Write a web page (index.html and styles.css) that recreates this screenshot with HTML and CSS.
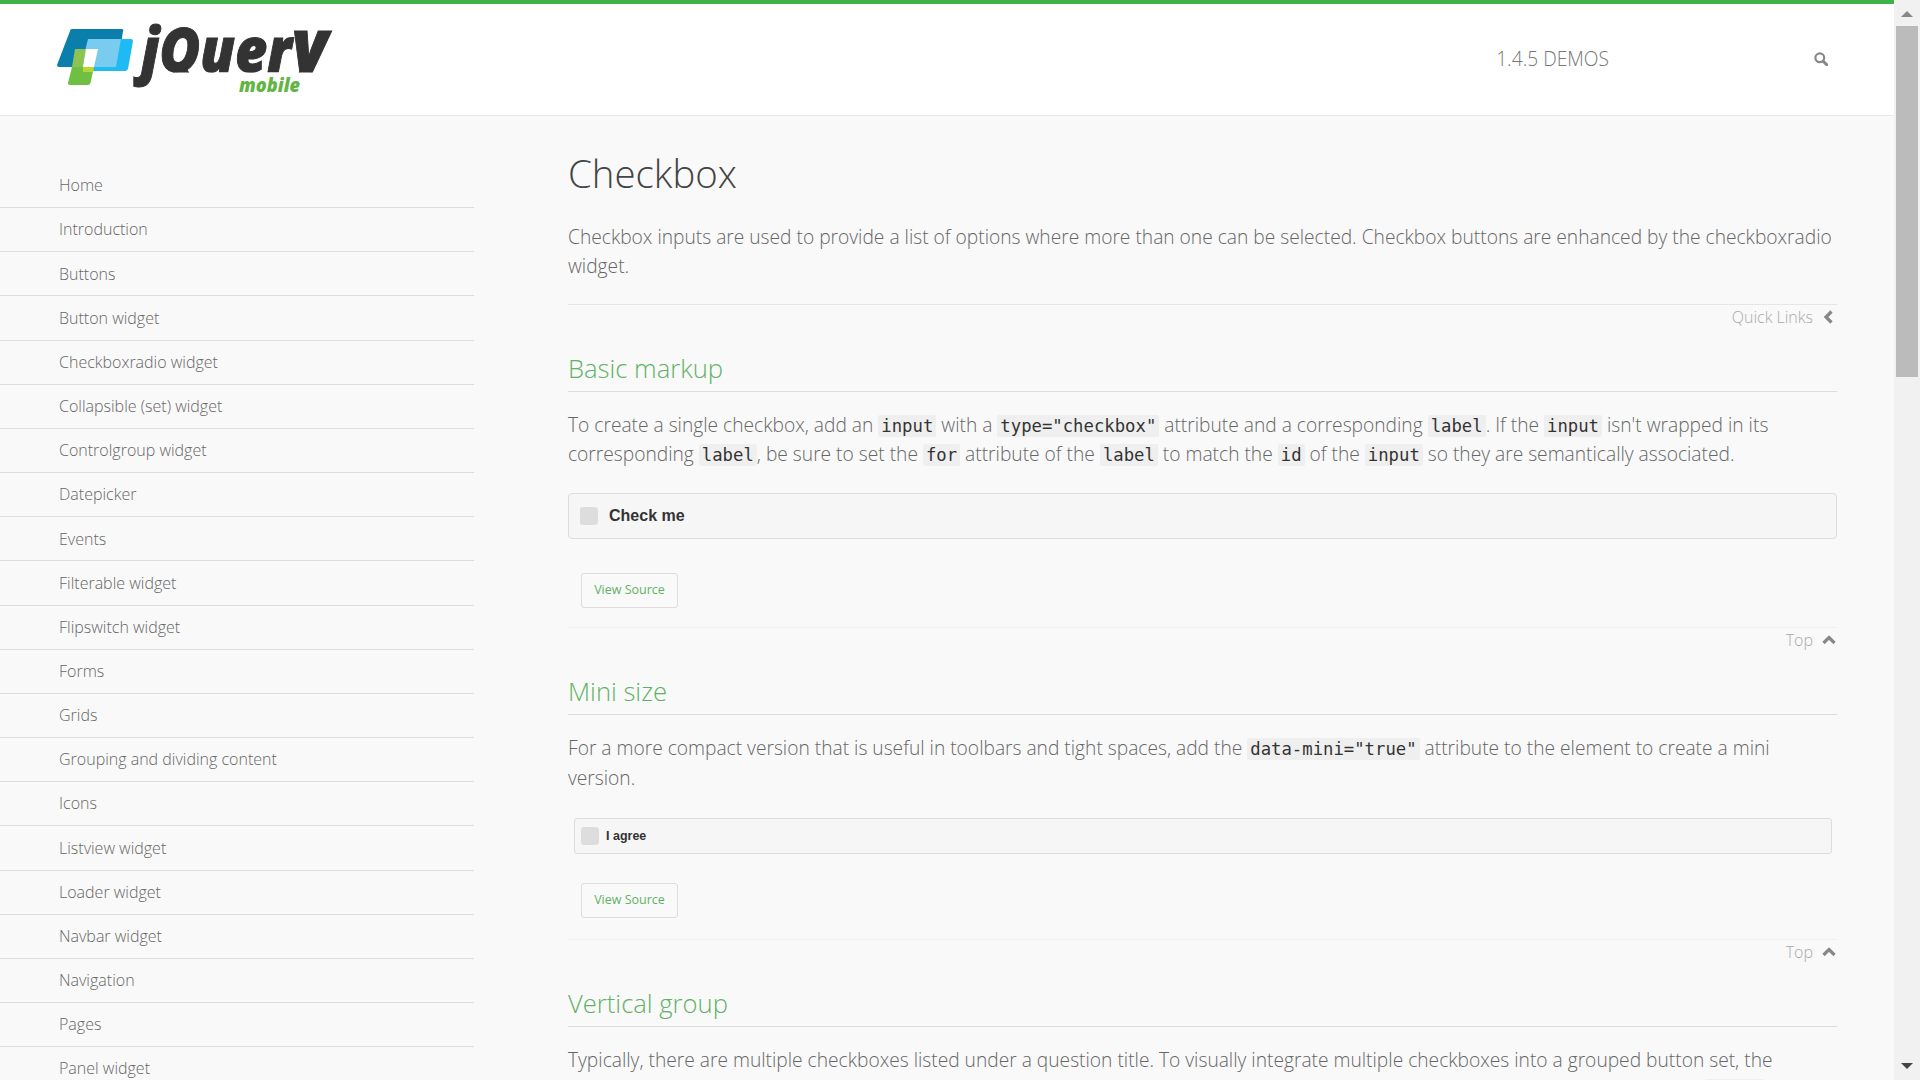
FILE: index.html
```html
<!DOCTYPE html>
<html lang="en">
<head>
    <meta charset="UTF-8">
    <title>Checkbox - jQuery Mobile Demos</title>
    <link rel="stylesheet" href="styles.css">
</head>
<body>

<div class="page">
    <header class="site-header">
        <a class="logo" href="#">
            <svg class="logo-svg" width="280" height="70" viewBox="0 0 280 70">
                <defs>
                    <clipPath id="word-clip"><polygon points="50,-30 290,-30 290,47.5 118,47.5 118,90 50,90"/></clipPath>
                </defs>
                <path d="M13 6 Q13 4 15 4 H65 Q67 4 66 6 L61 40 Q61 42 59 42 H2 Q0 42 0 40 Z" fill="#0b7fab"/>
                <path d="M33 14 H74 Q76 14 76 16 L71 44 Q70 46 68 46 H29 Q27 46 27 44 Z" fill="#1dbaf3"/>
                <path d="M31 14 H64 L59 42 H24 Z" fill="#7acbf0"/>
                <path d="M18 24 H29 L26 42 H15 Z" fill="#8dc353"/>
                <path d="M29 24 H41 L37 42 H26 Z" fill="#fff"/>
                <path d="M15 42 H37 L33.5 58 Q33 60 31 60 H13 Q11 60 11 58 Z" fill="#6ebf42"/>
                <path d="M26 42 H37 L36 47 H26 Z" fill="#bcd631"/>
                <text class="logo-word" clip-path="url(#word-clip)" x="84" y="47" textLength="187" lengthAdjust="spacingAndGlyphs">jQuer<tspan class="logo-y">y</tspan></text>
                <text class="logo-sub" x="182" y="67" textLength="61" lengthAdjust="spacingAndGlyphs">mobile</text>
            </svg>
        </a>
        <div class="header-right">
            <span class="version">1.4.5 DEMOS</span>
            <svg class="search-icon" width="14" height="14" viewBox="0 0 14 14">
                <circle cx="5.8" cy="5.8" r="4.4" fill="none" stroke="#888" stroke-width="2.2"/>
                <path d="M9.2 9.2 L12.6 12.6" stroke="#888" stroke-width="3" stroke-linecap="round"/>
            </svg>
        </div>
    </header>

    <div class="layout">
        <nav class="side-nav">
            <ul>
                <li>Home</li>
                <li>Introduction</li>
                <li>Buttons</li>
                <li>Button widget</li>
                <li>Checkboxradio widget</li>
                <li>Collapsible (set) widget</li>
                <li>Controlgroup widget</li>
                <li>Datepicker</li>
                <li>Events</li>
                <li>Filterable widget</li>
                <li>Flipswitch widget</li>
                <li>Forms</li>
                <li>Grids</li>
                <li>Grouping and dividing content</li>
                <li>Icons</li>
                <li>Listview widget</li>
                <li>Loader widget</li>
                <li>Navbar widget</li>
                <li>Navigation</li>
                <li>Pages</li>
                <li>Panel widget</li>
            </ul>
        </nav>

        <main class="content">
            <h1>Checkbox</h1>
            <p class="intro">Checkbox inputs are used to provide a list of options where more than one can be selected. Checkbox buttons are enhanced by the checkboxradio widget.</p>

            <div class="jump-row">
                <span>Quick Links</span>
                <svg width="14" height="14" viewBox="0 0 14 14"><path d="M9.5 1.5 L4 7 L9.5 12.5" fill="none" stroke="#888" stroke-width="3.2"/></svg>
            </div>

            <section class="demo demo-first">
                <h2>Basic markup</h2>
                <p>To create a single checkbox, add an <code>input</code> with a <code>type="checkbox"</code> attribute and a corresponding <code>label</code>. If the <code>input</code> isn't wrapped in its corresponding <code>label</code>, be sure to set the <code>for</code> attribute of the <code>label</code> to match the <code>id</code> of the <code>input</code> so they are semantically associated.</p>
                <div class="check-field"><span class="check-box"></span>Check me</div>
                <a class="source-btn" href="#">View Source</a>
            </section>

            <div class="jump-row">
                <span>Top</span>
                <svg width="14" height="14" viewBox="0 0 14 14"><path d="M1.5 10 L7 4.5 L12.5 10" fill="none" stroke="#888" stroke-width="3.2"/></svg>
            </div>

            <section class="demo demo-mini">
                <h2>Mini size</h2>
                <p>For a more compact version that is useful in toolbars and tight spaces, add the <code>data-mini="true"</code> attribute to the element to create a mini version.</p>
                <div class="check-field check-mini"><span class="check-box"></span>I agree</div>
                <a class="source-btn" href="#">View Source</a>
            </section>

            <div class="jump-row">
                <span>Top</span>
                <svg width="14" height="14" viewBox="0 0 14 14"><path d="M1.5 10 L7 4.5 L12.5 10" fill="none" stroke="#888" stroke-width="3.2"/></svg>
            </div>

            <section class="demo">
                <h2>Vertical group</h2>
                <p>Typically, there are multiple checkboxes listed under a question title. To visually integrate multiple checkboxes into a grouped button set, the framework will automatically remove all margins between buttons and round only the top and bottom corners of the set. Wrap each <code>input</code> in a fieldset.</p>
            </section>
        </main>
    </div>
</div>

<div class="scrollbar">
    <span class="arrow-up"></span>
    <div class="thumb"></div>
    <span class="arrow-down"></span>
</div>

</body>
</html>
```

FILE: styles.css
```css
html, body { margin: 0; height: 100%; }
body { display: flex; height: 100vh; overflow: hidden; background: #f9f9f9; color: #666; font-family: "Open Sans", sans-serif; font-weight: 300; }

.page { flex: 1; min-width: 0; overflow: hidden; }

.site-header { height: 111px; background: white; border-top: 4px solid #3eb249; border-bottom: 1px solid #e9e9e9; display: flex; justify-content: space-between; align-items: center; }
.logo { display: block; margin-left: 57px; height: 70px; }
.logo-svg { overflow: visible; }
.logo-word { font-family: "Open Sans", sans-serif; font-weight: 800; font-style: italic; font-size: 62px; fill: #333; stroke: #333; stroke-width: 1px; }
.logo-y { font-size: 74px; }
.logo-sub { font-family: "Open Sans", sans-serif; font-weight: 800; font-style: italic; font-size: 19px; fill: #62b544; }
.header-right { display: flex; align-items: center; margin-right: 66px; padding-bottom: 2px; }
.version { font-size: 19.2px; color: #777; margin-right: 205px; }

.layout { display: flex; }

.side-nav { width: 474px; margin-top: 48px; flex-shrink: 0; }
.side-nav ul { list-style: none; margin: 0; padding: 0; }
.side-nav li { height: 44.17px; box-sizing: border-box; padding: 0 0 0.6px 59px; display: flex; align-items: center; font-size: 16px; color: #666; border-bottom: 1px solid #ddd; }

.content { width: 1269px; margin-left: 94px; }

h1 { font-size: 38.4px; font-weight: 300; color: #444; line-height: 50px; margin: 32px 0 0; }
p { font-size: 19.2px; line-height: 29.4px; margin: 0; }
.intro { margin-top: 24px; padding-bottom: 23px; border-bottom: 1px solid #e6e6e6; }

.jump-row { display: flex; justify-content: flex-end; align-items: center; gap: 9px; height: 27px; box-sizing: border-box; padding: 0 1px 3px 0; font-size: 16px; color: #aaa; }

.demo { padding-top: 19px; border-bottom: 1px solid #f0f0f0; padding-bottom: 19px; }
.demo h2 { font-size: 25.6px; font-weight: 300; color: #5fb265; line-height: 36px; margin: 0 0 18px; padding-bottom: 4px; border-bottom: 1px solid #ddd; }

code { font-family: "DejaVu Sans Mono", monospace; font-size: 17.28px; line-height: 1; color: #333; background: #efefef; padding: 1px 3px; border-radius: 2px; }

.check-field { display: flex; align-items: center; height: 46px; box-sizing: border-box; margin-top: 24.5px; background: #f6f6f6; border: 1px solid #ddd; border-radius: 4px; padding-left: 11px; font-family: "Liberation Sans", sans-serif; font-weight: bold; font-size: 16px; color: #333; }
.check-box { width: 18px; height: 18px; background: #ddd; border-radius: 3px; margin-right: 11px; }
.check-mini { height: 36px; margin: 26px 5px 0 6px; padding-left: 6px; font-size: 12.5px; border-radius: 3px; }
.check-mini .check-box { margin-right: 7px; }

.source-btn { display: block; width: 97px; box-sizing: border-box; text-align: center; margin: 34px 0 0 13px; height: 35px; line-height: 32px; background: #f9f9f9; border: 1px solid #ddd; border-radius: 3px; font-size: 12.5px; font-weight: 400; color: #5fb265; text-decoration: none; }
.check-mini + .source-btn { margin-top: 29.5px; margin-bottom: 1.5px; }

.scrollbar { width: 26px; flex-shrink: 0; height: 100vh; background: #f1f1f1; position: relative; }
.thumb { position: absolute; top: 26px; left: 2px; width: 22px; height: 351px; background: #bbb; }
.arrow-up { position: absolute; top: 11px; left: 7px; border: 6px solid transparent; border-top: 0; border-bottom-color: #888; }
.arrow-down { position: absolute; bottom: 11px; left: 7px; border: 6px solid transparent; border-bottom: 0; border-top-color: #444; }
```
